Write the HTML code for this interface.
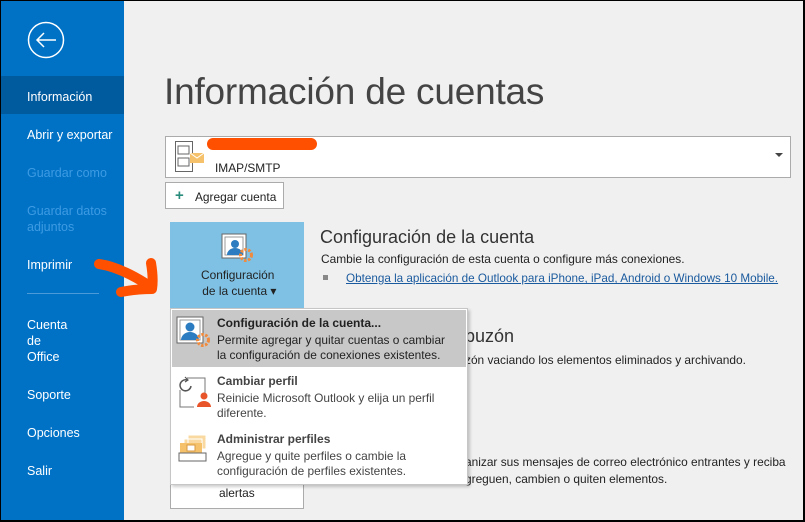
<!DOCTYPE html>
<html><head><meta charset="utf-8"><style>
*{margin:0;padding:0;box-sizing:border-box}
body{width:805px;height:522px;overflow:hidden;background:#000;font-family:"Liberation Sans",sans-serif;position:relative}
.a{position:absolute;white-space:nowrap}
#main{position:absolute;left:1px;top:1px;width:802px;height:519px;background:#f0f0f0;overflow:hidden}
#side{position:absolute;left:0;top:0;width:123px;height:519px;background:#0072c6}
.nav{position:absolute;left:26px;color:#fff;font-size:12.5px;line-height:16px}
.dim{color:#3d9be3}
.t{font-size:11.9px;color:#222}
</style></head><body>
<div id="main">
 <div id="side">
  <svg class="a" style="left:26px;top:20px" width="38" height="38"><circle cx="19" cy="19" r="17.5" fill="none" stroke="#fff" stroke-width="1.5"/><path d="M10 19H29M17 12L10 19L17 26" fill="none" stroke="#fff" stroke-width="1.5"/></svg>
  <div class="a" style="left:0;top:75px;width:123px;height:38px;background:#005a9e"></div>
  <div class="nav" style="top:88px">Información</div>
  <div class="nav" style="top:126px">Abrir y exportar</div>
  <div class="nav dim" style="top:164px">Guardar como</div>
  <div class="nav dim" style="top:202px">Guardar datos<br>adjuntos</div>
  <div class="nav" style="top:256px">Imprimir</div>
  <div class="a" style="left:26px;top:292px;width:72px;height:1px;background:#4c9bd8"></div>
  <div class="nav" style="top:316px">Cuenta<br>de<br>Office</div>
  <div class="nav" style="top:386px">Soporte</div>
  <div class="nav" style="top:424px">Opciones</div>
  <div class="nav" style="top:462px">Salir</div>
 </div>
 <div class="a" style="left:163px;top:70px;font-size:37px;color:#444;letter-spacing:-0.2px">Información de cuentas</div>
 <div class="a" style="left:164px;top:135px;width:626px;height:42px;background:#fff;border:1px solid #ababab"></div>
 <svg class="a" style="left:173px;top:139px" width="30" height="34"><rect x="1.5" y="1.5" width="17" height="30" fill="#fff" stroke="#666"/><path d="M4 6h11v8H4zM4 18h11v8H4z" fill="none" stroke="#666"/><rect x="16" y="13" width="14" height="10" fill="#f5c26b"/><path d="M16 13l7 5 7-5" fill="none" stroke="#fff"/></svg>
 <div class="a" style="left:206px;top:137px;width:110px;height:12px;border-radius:6px;background:#ff5000"></div>
 <div class="a t" style="left:214px;top:160px">IMAP/SMTP</div>
 <div class="a" style="left:774px;top:152px;border:4px solid transparent;border-top:4px solid #444"></div>
 <div class="a" style="left:164px;top:181px;width:119px;height:27px;background:#fff;border:1px solid #ababab"></div>
 <div class="a" style="left:174px;top:186px;color:#2a8c7c;font-size:15px;font-weight:bold">+</div>
 <div class="a t" style="left:194px;top:189px">Agregar cuenta</div>
 <div class="a" style="left:169px;top:221px;width:134px;height:86px;background:#7fc1e4"></div>
 <svg class="a" style="left:220px;top:232px" width="34" height="32"><rect x="1" y="1" width="24" height="24" fill="#fff" stroke="#666"/><rect x="4" y="4" width="18" height="18" fill="#fff" stroke="#999"/><circle cx="14" cy="11" r="4" fill="#2b7cc0"/><path d="M6 22a8 7 0 0 1 16 0z" fill="#2b7cc0"/><circle cx="25" cy="22" r="5.5" fill="none" stroke="#f08a3c" stroke-width="3" stroke-dasharray="2.5 1.5"/></svg>
 <div class="a t" style="left:198px;top:266px;text-align:center;line-height:16px">Configuración<br>&nbsp;de la cuenta ▾</div>
 <svg class="a" style="left:90px;top:250px" width="70" height="48"><path d="M8 13C22 15 38 22 54 32M60 12C62 24 62 32 61 38 50 38 40 39 30 41" fill="none" stroke="#ff5000" stroke-width="10" stroke-linecap="round" stroke-linejoin="round"/></svg>
 <div class="a" style="left:319px;top:226px;font-size:18px;color:#333">Configuración de la cuenta</div>
 <div class="a t" style="left:320px;top:251px">Cambie la configuración de esta cuenta o configure más conexiones.</div>
 <div class="a" style="left:322px;top:274px;width:5px;height:5px;background:#888"></div>
 <div class="a t" style="left:345px;top:271px;color:#1a5a9e;text-decoration:underline;font-size:11.7px">Obtenga la aplicación de Outlook para iPhone, iPad, Android o Windows 10 Mobile.</div>
 <div class="a" style="left:464px;top:325px;font-size:18px;color:#333">buzón</div>
 <div class="a t" style="left:464px;top:352px">zón vaciando los elementos eliminados y archivando.</div>
 <div class="a t" style="left:464px;top:454px">anizar sus mensajes de correo electrónico entrantes y reciba</div>
 <div class="a t" style="left:464px;top:471px">greguen, cambien o quiten elementos.</div>
 <div class="a" style="left:169px;top:480px;width:134px;height:28px;background:#fff;border:1px solid #ababab;border-top:none"></div>
 <div class="a t" style="left:218px;top:485px">alertas</div>
 <div class="a" style="left:169px;top:307px;width:298px;height:177px;background:#fff;border:1px solid #c6c6c6;box-shadow:2px 2px 3px rgba(0,0,0,.2)"></div>
 <div class="a" style="left:171px;top:309px;width:294px;height:57px;background:#c8c8c8"></div>
 <svg class="a" style="left:175px;top:315px" width="36" height="34"><rect x="1" y="1" width="26" height="26" fill="#fff" stroke="#666"/><rect x="4" y="4" width="20" height="20" fill="#fff" stroke="#999"/><circle cx="14" cy="11" r="4.5" fill="#2b7cc0"/><path d="M5 24a9 8 0 0 1 18 0z" fill="#2b7cc0"/><circle cx="27" cy="24" r="5.5" fill="none" stroke="#f08a3c" stroke-width="3" stroke-dasharray="2.5 1.5"/></svg>
 <div class="a" style="left:216px;top:315px;font-size:12px;font-weight:bold;color:#222">Configuración de la cuenta...</div>
 <div class="a t" style="left:216px;top:332px;line-height:15px">Permite agregar y quitar cuentas o cambiar<br>la configuración de conexiones existentes.</div>
 <svg class="a" style="left:175px;top:373px" width="36" height="34"><path d="M11 4h18v16M4 16v17h14" fill="none" stroke="#777"/><path d="M15 12a5.5 5.5 0 1 1-4-6" fill="none" stroke="#555" stroke-width="1.5"/><path d="M9 3l3 3-3 2" fill="none" stroke="#555" stroke-width="1.2"/><circle cx="28" cy="22" r="3.5" fill="#e8552a"/><path d="M21 33a7 6 0 0 1 14 0z" fill="#e8552a"/></svg>
 <div class="a" style="left:216px;top:373px;font-size:12px;font-weight:bold;color:#444">Cambiar perfil</div>
 <div class="a t" style="left:216px;top:390px;line-height:15px;color:#444">Reinicie Microsoft Outlook y elija un perfil<br>diferente.</div>
 <svg class="a" style="left:177px;top:432px" width="34" height="30"><path d="M10 2h18v14H10zM6 6h18v14H6z" fill="#f9d9a0" stroke="#fff"/><path d="M2 10h22v10H2z" fill="#f5c26b"/><rect x="9" y="12" width="8" height="6" fill="#fff" stroke="#d89a40"/><rect x="1" y="20" width="27" height="8" fill="#fff" stroke="#666"/></svg>
 <div class="a" style="left:216px;top:431px;font-size:12px;font-weight:bold;color:#444">Administrar perfiles</div>
 <div class="a t" style="left:216px;top:448px;line-height:15px;color:#444">Agregue y quite perfiles o cambie la<br>configuración de perfiles existentes.</div>
</div>
</body></html>
